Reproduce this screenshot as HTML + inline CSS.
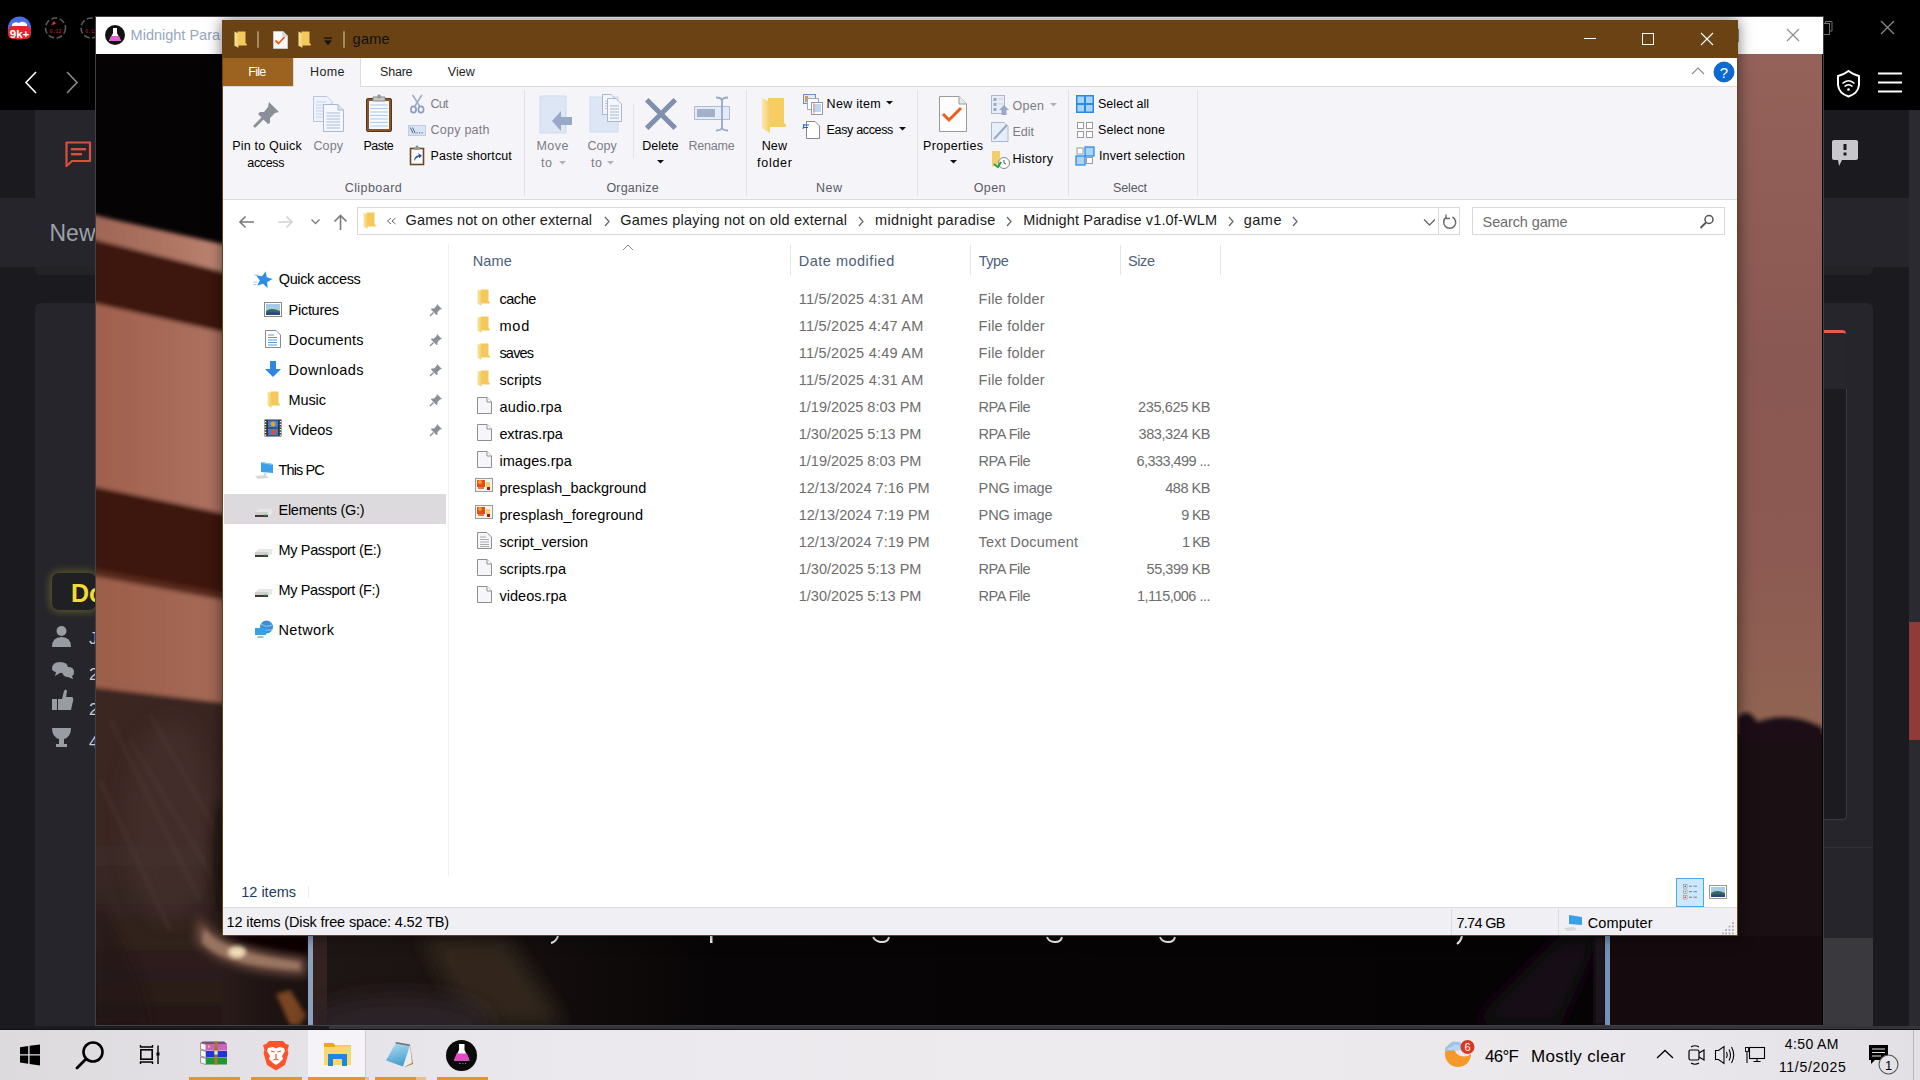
<!DOCTYPE html>
<html><head><meta charset="utf-8"><style>
html,body{margin:0;padding:0;width:1920px;height:1080px;overflow:hidden;background:#000;}
body{position:relative;font-family:"Liberation Sans",sans-serif;}
.t{position:absolute;white-space:nowrap;font-family:"Liberation Sans",sans-serif;}
svg{overflow:visible;}
</style></head><body>
<div style="position:absolute;left:0px;top:0px;width:1920px;height:1030px;background:#1b1b1f;"></div>
<div style="position:absolute;left:0px;top:0px;width:1920px;height:110px;background:#000;"></div>
<div style="position:absolute;left:35px;top:110px;width:61px;height:88px;background:#25252b;"></div>
<div style="position:absolute;left:0px;top:198px;width:96px;height:69px;background:#25252b;"></div>
<div style="position:absolute;left:35px;top:267px;width:61px;height:8px;background:#222227;border-radius:0 0 0 6px;"></div>
<div style="position:absolute;left:35px;top:303px;width:61px;height:727px;background:#25252b;border-radius:6px 0 0 0;"></div>
<svg style="position:absolute;left:0;top:0" width="96" height="110">
<path d="M8 30 A11.5 11.5 0 0 1 31 30 L31 30 Z" fill="#4a6ee0"/>
<circle cx="19.5" cy="28" r="11.5" fill="#4a6ee0"/>
<path d="M12 24 Q15 21 19 23 Q23 20 27 24 L27 27 L12 27Z" fill="#fff"/>
<rect x="8" y="26" width="23" height="13" rx="5" fill="#e8242a"/>
<text x="19.5" y="37.5" font-family="Liberation Sans" font-weight="bold" font-size="11.5" fill="#fff" text-anchor="middle">9k+</text>
<circle cx="55.5" cy="28" r="10" fill="none" stroke="#5a5a5a" stroke-width="1.6" stroke-dasharray="6 2.5"/>
<path d="M51 25 L54 21 L56 24 Z" fill="#e03030"/>
<text x="55.5" y="33" font-family="Liberation Mono" font-size="5" fill="#c02020" text-anchor="middle">0:12</text>
<circle cx="91" cy="28" r="10" fill="none" stroke="#5a5a5a" stroke-width="1.6" stroke-dasharray="6 2.5"/>
<text x="91" y="33" font-family="Liberation Mono" font-size="5" fill="#c02020" text-anchor="middle">0:12</text>
<path d="M36 72 L26 82.5 L36 93" fill="none" stroke="#fff" stroke-width="1.6"/>
<path d="M67 72 L77 82.5 L67 93" fill="none" stroke="#8a8a8a" stroke-width="1.6"/>
</svg>
<svg style="position:absolute;left:64;top:140px;left:64px" width="30" height="30">
<path d="M2.5 2.5 H26 V21 H8 L2.5 26 Z" fill="none" stroke="#d9503f" stroke-width="2.2" stroke-linejoin="round"/>
<rect x="7" y="8" width="15" height="2.4" fill="#d9503f"/><rect x="7" y="13" width="11" height="2.4" fill="#d9503f"/>
</svg>
<div class="t" style="left:49.50px;top:221.53px;font-size:23px;line-height:23px;color:#9ea0a8;">New</div>
<div style="position:absolute;left:52px;top:573px;width:44px;height:37px;background:#1f1f24;border-radius:7px;box-shadow:0 0 9px 2px rgba(200,190,40,0.35);"></div>
<div class="t" style="left:71.00px;top:580.84px;font-size:25px;line-height:25px;color:#f2dc32;font-weight:bold;">Do</div>
<svg style="position:absolute;left:50px;top:625px" width="46" height="125">
<circle cx="11.5" cy="6" r="5" fill="#9a9ca4"/><path d="M2 22 Q2 12 11.5 12 Q21 12 21 22 Z" fill="#9a9ca4"/>
<path d="M2 44 Q2 37 10 37 Q18 37 18 43 Q18 48 10 48 L5 51 L6 47 Q2 46 2 44Z" fill="#9a9ca4"/>
<path d="M12 47 Q13 43 18 42 Q24 42 24 47 Q24 50 22 51 L23 54 L18 52 Q13 52 12 47Z" fill="#9a9ca4"/>
<rect x="2" y="74" width="5" height="11" fill="#9a9ca4"/><path d="M8 74 L12 74 L14 66 Q16 63 17 66 L16 72 L22 72 Q24 73 23 76 L21 85 L8 85Z" fill="#9a9ca4"/>
<path d="M4 103 H21 Q21 112 14 114 V119 H17 V122 H6 V119 H9 V114 Q2 112 2 103Z" fill="#9a9ca4"/>
</svg>
<div class="t" style="left:89.00px;top:629.61px;font-size:17px;line-height:17px;color:#c8c8d0;">J</div>
<div class="t" style="left:89.00px;top:665.61px;font-size:17px;line-height:17px;color:#c8c8d0;">2</div>
<div class="t" style="left:89.00px;top:700.61px;font-size:17px;line-height:17px;color:#c8c8d0;">2</div>
<div class="t" style="left:89.00px;top:733.61px;font-size:17px;line-height:17px;color:#c8c8d0;">4</div>
<div style="position:absolute;left:1823px;top:198px;width:86px;height:69px;background:#25252b;"></div>
<div style="position:absolute;left:1823px;top:267px;width:50px;height:8px;background:#222227;border-radius:0 0 6px 0;"></div>
<div style="position:absolute;left:1823px;top:303px;width:50px;height:545px;background:#25252b;border-radius:0 6px 0 0;"></div>
<div style="position:absolute;left:1823px;top:330px;width:23px;height:59px;background:#26262c;border-top:3px solid #e85a4a;border-radius:0 4px 0 0;"></div>
<div style="position:absolute;left:1823px;top:389px;width:23px;height:430px;background:#1b1b20;border-right:1px solid #3a3a40;border-bottom:1px solid #3a3a40;border-radius:0 0 4px 0;"></div>
<div style="position:absolute;left:1823px;top:847px;width:50px;height:91px;background:#25252b;border-top:1px solid #303036;"></div>
<div style="position:absolute;left:1823px;top:938px;width:50px;height:92px;background:#3a393e;"></div>
<div style="position:absolute;left:1909px;top:110px;width:11px;height:920px;background:#2b2a30;"></div>
<div style="position:absolute;left:1909px;top:622px;width:11px;height:118px;background:#8e3b3a;"></div>
<svg style="position:absolute;left:1820px;top:15px" width="100" height="160">
<path d="M5.5 8.5 V6.5 H12 V16 H10" fill="none" stroke="#707070" stroke-width="1"/><rect x="2.5" y="8.5" width="7" height="11" fill="none" stroke="#707070" stroke-width="1"/>
<path d="M61 6 L74 19 M74 6 L61 19" stroke="#8a8a8a" stroke-width="1.3"/>
<path d="M18 61 Q24 59.5 28.5 56 Q33 59.5 39 61 L39 70 Q38 78.5 28.5 81.5 Q19 78.5 18 70Z" fill="none" stroke="#fff" stroke-width="2"/>
<path d="M22.5 68.5 Q28.5 63 34.5 68.5 M24.5 71.5 Q28.5 68 32.5 71.5" fill="none" stroke="#fff" stroke-width="1.6"/><circle cx="28.5" cy="74.5" r="1.3" fill="#fff"/>
<path d="M58 58.5 H82 M58 67.5 H82 M58 76.5 H82" stroke="#fff" stroke-width="2"/>
<path d="M14 125 H36 Q38 125 38 127 V143 Q38 145 36 145 H22 L19 151 L18 145 H14 Q12 145 12 143 V127 Q12 125 14 125Z" fill="#c8c8cc"/>
<rect x="23.5" y="129" width="3" height="6" fill="#1b1b1f"/><rect x="23.5" y="137.5" width="3" height="3" fill="#1b1b1f"/>
</svg>
<div style="position:absolute;left:95px;top:16px;width:1729px;height:1010px;background:#404046;"></div>
<div style="position:absolute;left:96px;top:17px;width:1727px;height:37px;background:#fff;"></div>
<svg style="position:absolute;left:96px;top:17px" width="1727" height="37">
<circle cx="19" cy="18" r="10" fill="#111"/>
<path d="M17 11 H21 V16 L25 24 H13 L17 16Z" fill="#fff"/><path d="M15 19 H23 L25 24 H13Z" fill="#e060d0"/>
<path d="M1691 12 L1703 24 M1703 12 L1691 24" stroke="#8a8a8a" stroke-width="1.1"/><rect x="1630.5" y="12.5" width="12" height="12" fill="none" stroke="#8a8a8a"/>

</svg>
<div class="t" style="left:130.60px;top:28.33px;font-size:14.5px;line-height:14.5px;color:#98a6bd;">Midnight Para</div>
<svg style="position:absolute;left:96px;top:54px;overflow:hidden" width="1727" height="971" viewBox="96 54 1727 971">
<defs>
<filter id="b2" x="-20%" y="-20%" width="140%" height="140%"><feGaussianBlur stdDeviation="2"/></filter>
<filter id="b5" x="-50%" y="-50%" width="200%" height="200%"><feGaussianBlur stdDeviation="5"/></filter>
<filter id="b10" x="-50%" y="-50%" width="200%" height="200%"><feGaussianBlur stdDeviation="10"/></filter>
<linearGradient id="beam" x1="0" y1="0" x2="1" y2="0"><stop offset="0" stop-color="#9c6252"/><stop offset="0.7" stop-color="#b47a68"/><stop offset="1" stop-color="#c89080"/></linearGradient>
<linearGradient id="wall1" x1="0" y1="0" x2="1" y2="0"><stop offset="0" stop-color="#9e5e4a"/><stop offset="1" stop-color="#b07464"/></linearGradient>
<linearGradient id="wall2" x1="0" y1="0" x2="1" y2="0"><stop offset="0" stop-color="#9a5c48"/><stop offset="1" stop-color="#a86c58"/></linearGradient>
<linearGradient id="dark" x1="0" y1="0" x2="0" y2="1"><stop offset="0" stop-color="#3a2622"/><stop offset="0.5" stop-color="#3a2925"/><stop offset="1" stop-color="#241614"/></linearGradient>
<linearGradient id="rwall" x1="0" y1="0" x2="0" y2="1"><stop offset="0" stop-color="#95625a"/><stop offset="0.45" stop-color="#8a5852"/><stop offset="0.75" stop-color="#8c5a52"/><stop offset="1" stop-color="#906452"/></linearGradient>
<linearGradient id="botg" x1="0" y1="0" x2="1" y2="0"><stop offset="0" stop-color="#1e1614"/><stop offset="0.1" stop-color="#1a1311"/><stop offset="0.3" stop-color="#080506"/><stop offset="1" stop-color="#060305"/></linearGradient>
<linearGradient id="stripg" x1="0" y1="0" x2="1" y2="0"><stop offset="0" stop-color="#291b1a"/><stop offset="0.5" stop-color="#1d1312"/><stop offset="1" stop-color="#1a1010"/></linearGradient>
</defs>
<rect x="96" y="54" width="1727" height="971" fill="#050304"/>
<g filter="url(#b2)">
<polygon points="80,210 240,256 240,340 80,300" fill="#3c140b"/>
<polygon points="80,212 240,248 240,276 80,236" fill="url(#beam)"/>
<polygon points="80,300 240,336 240,517 80,484" fill="url(#wall1)"/>
<polygon points="80,484 240,517 240,603 80,573" fill="#3e170e"/>
<polygon points="80,573 240,603 240,705 80,686" fill="url(#wall2)"/><polygon points="80,566 240,596 240,602 80,572" fill="#5a2a1a"/>
<polygon points="80,686 240,705 240,1040 80,1040" fill="url(#dark)"/>
</g>
<ellipse cx="170" cy="820" rx="45" ry="100" fill="#4a3430" opacity="0.5" filter="url(#b10)"/><g stroke="#5a4440" stroke-width="3" opacity="0.35" filter="url(#b2)"><path d="M110 720 L200 900"/><path d="M130 740 L215 880"/><path d="M150 715 L222 840"/><path d="M100 780 L170 930"/></g><path d="M96 900 Q140 960 150 1025 L96 1025Z" fill="#221614" opacity="0.6" filter="url(#b5)"/>
<ellipse cx="222" cy="860" rx="10" ry="60" fill="#1c1210" opacity="0.8" filter="url(#b5)"/>

<rect x="1737" y="54" width="86" height="680" fill="url(#rwall)"/>
<path d="M1737 718 Q1748 706 1757 722 Q1790 710 1823 728 L1823 1025 L1737 1025Z" fill="#1d1114" filter="url(#b2)"/>
<rect x="1737" y="740" width="86" height="285" fill="#1a0f12"/>
<rect x="222" y="936" width="105" height="89" fill="url(#stripg)"/>
<path d="M222 936 H308 V955 Q250 950 225 936Z" fill="#0c0505" filter="url(#b2)"/>
<path d="M198 915 Q215 948 306 958 L306 976 Q220 972 196 940Z" fill="#6e4e40" filter="url(#b5)"/><path d="M204 928 Q222 952 300 962 L300 970 Q222 966 202 942Z" fill="#9a7662" filter="url(#b2)"/>
<ellipse cx="237" cy="952" rx="9" ry="6" fill="#f0dcb8" filter="url(#b2)"/>
<path d="M276 994 L290 990 L306 1015 L300 1025 L290 1025Z" fill="#7a4420" filter="url(#b2)"/>
<rect x="313" y="936" width="14" height="89" fill="#33221f"/>
<rect x="327" y="936" width="1280" height="89" fill="url(#botg)"/><polygon points="420,936 505,936 565,1025 470,1025" fill="#30261a" filter="url(#b10)"/><ellipse cx="400" cy="1022" rx="90" ry="28" fill="#2c2028" filter="url(#b10)"/><polygon points="1600,936 1560,1025 1470,1025 1560,936" fill="#140d12" filter="url(#b10)"/>
<rect x="1594" y="936" width="12" height="89" fill="#1c171a" filter="url(#b2)"/>
<rect x="1608" y="936" width="215" height="89" fill="#150a0e"/>
<rect x="308" y="936" width="5" height="89" fill="#8aa2be"/>
<rect x="1605" y="936" width="5" height="89" fill="#7392b4"/>
<path d="M558 936 Q556 942 551 943" stroke="#fff" stroke-width="2" fill="none"/>
<rect x="710" y="936" width="2.5" height="7" fill="#fff"/>
<path d="M873 937 Q876 942 882 942 Q888 942 889 937" stroke="#fff" stroke-width="2" fill="none"/>
<path d="M1047 937 Q1049 942 1055 942 Q1061 942 1062 937" stroke="#fff" stroke-width="2" fill="none"/>
<path d="M1160 937 Q1162 942 1168 942 Q1174 942 1175 937" stroke="#fff" stroke-width="2" fill="none"/>
<path d="M1462 936 Q1461 941 1457 944" stroke="#fff" stroke-width="2" fill="none"/>
<rect x="1822" y="54" width="1" height="971" fill="#000"/>
</svg>
<div style="position:absolute;left:222px;top:20px;width:1516px;height:916px;background:#fff;box-shadow:0 0 14px rgba(0,0,0,0.55);"></div>
<div style="position:absolute;left:222px;top:20px;width:1516px;height:38px;background:#6a4213;"></div>
<div style="position:absolute;left:222px;top:20px;width:1px;height:916px;background:#6a4213;"></div>
<div style="position:absolute;left:1737px;top:20px;width:1px;height:916px;background:#6a4213;"></div>
<div style="position:absolute;left:222px;top:935px;width:1516px;height:1px;background:#6a4213;"></div>
<svg style="position:absolute;left:234px;top:31px" width="13" height="17" viewBox="0 0 13 17">
<defs><linearGradient id="fg1" x1="0" y1="0" x2="1" y2="0"><stop offset="0" stop-color="#fde6a0"/><stop offset="1" stop-color="#f3cc66"/></linearGradient></defs>
<path d="M3.5 0.5 H11.5 V12 L12.8 13 V14.5 H3.5Z" fill="#f4c85a"/>
<path d="M0.5 0.5 L4.5 2.5 V16.8 L0.5 14.8Z" fill="url(#fg1)"/>
</svg>
<div style="position:absolute;left:257px;top:31px;width:2px;height:17px;background:#a88a60;border-radius:1px;"></div>
<svg style="position:absolute;left:273px;top:31px" width="15" height="18"><path d="M0.5 0.5 H10 L14.5 5 V17.5 H0.5Z" fill="#fafafa" stroke="#c9c9c9"/><path d="M10 0.5 V5 H14.5" fill="#e0e0e0" stroke="#c9c9c9"/><path d="M2.5 9.5 L5.5 12.5 L11.5 6" fill="none" stroke="#f25a1a" stroke-width="1.8"/></svg>
<svg style="position:absolute;left:298px;top:31px" width="13" height="17" viewBox="0 0 13 17">
<defs><linearGradient id="fg2" x1="0" y1="0" x2="1" y2="0"><stop offset="0" stop-color="#fde6a0"/><stop offset="1" stop-color="#f3cc66"/></linearGradient></defs>
<path d="M3.5 0.5 H11.5 V12 L12.8 13 V14.5 H3.5Z" fill="#f4c85a"/>
<path d="M0.5 0.5 L4.5 2.5 V16.8 L0.5 14.8Z" fill="url(#fg2)"/>
</svg>
<svg style="position:absolute;left:323px;top:37px" width="10" height="9"><rect x="1" y="0.5" width="8" height="1.3" fill="#111"/><path d="M1 3.5 H9 L5 8Z" fill="#111"/></svg>
<div style="position:absolute;left:343px;top:31px;width:2px;height:17px;background:#a88a60;border-radius:1px;"></div>
<div class="t" style="left:352.60px;top:32.13px;font-size:14.5px;line-height:14.5px;color:#111;letter-spacing:0.233px;">game</div>
<div style="position:absolute;left:1584px;top:38px;width:12px;height:1px;background:#fff;"></div>
<div style="position:absolute;left:1642px;top:33px;width:12px;height:12px;background:transparent;border:1px solid #fff;box-sizing:border-box;"></div>
<svg style="position:absolute;left:1700px;top:32px" width="14" height="14"><path d="M1 1 L13 13 M13 1 L1 13" stroke="#fff" stroke-width="1.1"/></svg>
<div style="position:absolute;left:223px;top:58px;width:1514px;height:28px;background:#fff;"></div>
<div style="position:absolute;left:223px;top:86px;width:1514px;height:1px;background:#dadbdc;"></div>
<div style="position:absolute;left:223px;top:58px;width:71px;height:28px;background:#9c6220;"></div>
<div style="position:absolute;left:293px;top:58px;width:68px;height:29px;background:#f5f5f9;border-left:1px solid #dadbdc;border-right:1px solid #dadbdc;box-sizing:border-box;"></div>
<div class="t" style="left:248.25px;top:66.32px;font-size:12.5px;line-height:12.5px;color:#fff;letter-spacing:-0.700px;">File</div>
<div class="t" style="left:310.10px;top:66.32px;font-size:12.5px;line-height:12.5px;color:#1e1e1e;letter-spacing:0.367px;">Home</div>
<div class="t" style="left:380.00px;top:66.32px;font-size:12.5px;line-height:12.5px;color:#1e1e1e;letter-spacing:-0.200px;">Share</div>
<div class="t" style="left:447.80px;top:66.32px;font-size:12.5px;line-height:12.5px;color:#1e1e1e;letter-spacing:0.033px;">View</div>
<svg style="position:absolute;left:1690px;top:66px" width="16" height="12"><path d="M2 8 L8 2 L14 8" fill="none" stroke="#8a8a8a" stroke-width="1.1"/></svg>
<svg style="position:absolute;left:1713px;top:61px" width="22" height="22"><circle cx="11" cy="11" r="10" fill="#0a6ad6"/><circle cx="11" cy="11" r="10" fill="none" stroke="#0652a8" stroke-width="0.8"/><text x="11" y="17" font-family="Liberation Sans" font-size="15" fill="#fff" text-anchor="middle">?</text></svg>
<div style="position:absolute;left:223px;top:87px;width:1514px;height:112px;background:#f5f5f9;"></div>
<div style="position:absolute;left:223px;top:199px;width:1514px;height:1px;background:#dadbdc;"></div>
<div style="position:absolute;left:523.5px;top:90px;width:1px;height:106px;background:#e2e3e4;"></div>
<div style="position:absolute;left:745.5px;top:90px;width:1px;height:106px;background:#e2e3e4;"></div>
<div style="position:absolute;left:916.5px;top:90px;width:1px;height:106px;background:#e2e3e4;"></div>
<div style="position:absolute;left:1067.5px;top:90px;width:1px;height:106px;background:#e2e3e4;"></div>
<div style="position:absolute;left:1196.5px;top:90px;width:1px;height:106px;background:#e2e3e4;"></div>
<div style="position:absolute;left:632.5px;top:104px;width:1px;height:54px;background:#e2e3e4;"></div>
<div class="t" style="left:232.20px;top:139.92px;font-size:12.5px;line-height:12.5px;color:#000;letter-spacing:0.191px;">Pin to Quick</div>
<div class="t" style="left:247.30px;top:157.02px;font-size:12.5px;line-height:12.5px;color:#000;letter-spacing:-0.340px;">access</div>
<div class="t" style="left:313.40px;top:139.92px;font-size:12.5px;line-height:12.5px;color:#7c7c86;letter-spacing:0.133px;">Copy</div>
<div class="t" style="left:363.40px;top:139.92px;font-size:12.5px;line-height:12.5px;color:#000;letter-spacing:-0.425px;">Paste</div>
<div class="t" style="left:430.60px;top:98.42px;font-size:12.5px;line-height:12.5px;color:#7c7c86;letter-spacing:-0.750px;">Cut</div>
<div class="t" style="left:430.60px;top:124.42px;font-size:12.5px;line-height:12.5px;color:#7c7c86;letter-spacing:0.237px;">Copy path</div>
<div class="t" style="left:430.60px;top:150.12px;font-size:12.5px;line-height:12.5px;color:#000;letter-spacing:0.100px;">Paste shortcut</div>
<div class="t" style="left:344.70px;top:182.42px;font-size:12.5px;line-height:12.5px;color:#5a5a66;letter-spacing:0.438px;">Clipboard</div>
<div class="t" style="left:536.40px;top:139.92px;font-size:12.5px;line-height:12.5px;color:#7c7c86;letter-spacing:0.533px;">Move</div>
<div class="t" style="left:541.00px;top:157.02px;font-size:12.5px;line-height:12.5px;color:#7c7c86;letter-spacing:0.600px;">to</div>
<div class="t" style="left:587.60px;top:139.92px;font-size:12.5px;line-height:12.5px;color:#7c7c86;">Copy</div>
<div class="t" style="left:591.00px;top:157.02px;font-size:12.5px;line-height:12.5px;color:#7c7c86;letter-spacing:0.600px;">to</div>
<div class="t" style="left:642.30px;top:139.92px;font-size:12.5px;line-height:12.5px;color:#000;letter-spacing:-0.020px;">Delete</div>
<div class="t" style="left:688.40px;top:139.92px;font-size:12.5px;line-height:12.5px;color:#7c7c86;letter-spacing:-0.200px;">Rename</div>
<div class="t" style="left:606.40px;top:182.42px;font-size:12.5px;line-height:12.5px;color:#5a5a66;letter-spacing:0.214px;">Organize</div>
<div class="t" style="left:761.80px;top:139.92px;font-size:12.5px;line-height:12.5px;color:#000;letter-spacing:0.050px;">New</div>
<div class="t" style="left:757.00px;top:157.02px;font-size:12.5px;line-height:12.5px;color:#000;letter-spacing:0.740px;">folder</div>
<div class="t" style="left:826.60px;top:98.42px;font-size:12.5px;line-height:12.5px;color:#000;letter-spacing:0.300px;">New item</div>
<div class="t" style="left:826.60px;top:124.12px;font-size:12.5px;line-height:12.5px;color:#000;letter-spacing:-0.340px;">Easy access</div>
<div class="t" style="left:816.00px;top:182.42px;font-size:12.5px;line-height:12.5px;color:#5a5a66;letter-spacing:0.450px;">New</div>
<div class="t" style="left:923.00px;top:139.92px;font-size:12.5px;line-height:12.5px;color:#000;letter-spacing:0.333px;">Properties</div>
<div class="t" style="left:1012.50px;top:99.62px;font-size:12.5px;line-height:12.5px;color:#7c7c86;letter-spacing:0.300px;">Open</div>
<div class="t" style="left:1012.50px;top:125.92px;font-size:12.5px;line-height:12.5px;color:#7c7c86;">Edit</div>
<div class="t" style="left:1012.50px;top:152.82px;font-size:12.5px;line-height:12.5px;color:#000;letter-spacing:0.267px;">History</div>
<div class="t" style="left:973.75px;top:182.42px;font-size:12.5px;line-height:12.5px;color:#5a5a66;letter-spacing:0.367px;">Open</div>
<div class="t" style="left:1098.00px;top:97.92px;font-size:12.5px;line-height:12.5px;color:#000;letter-spacing:0.033px;">Select all</div>
<div class="t" style="left:1098.00px;top:124.12px;font-size:12.5px;line-height:12.5px;color:#000;letter-spacing:0.100px;">Select none</div>
<div class="t" style="left:1099.00px;top:150.12px;font-size:12.5px;line-height:12.5px;color:#000;letter-spacing:0.127px;">Invert selection</div>
<div class="t" style="left:1113.00px;top:182.42px;font-size:12.5px;line-height:12.5px;color:#5a5a66;letter-spacing:-0.140px;">Select</div>
<svg style="position:absolute;left:559px;top:161px" width="7" height="4"><path d="M0 0 H7 L3.5 3.5Z" fill="#b0b0b8"/></svg>
<svg style="position:absolute;left:607px;top:161px" width="7" height="4"><path d="M0 0 H7 L3.5 3.5Z" fill="#b0b0b8"/></svg>
<svg style="position:absolute;left:657px;top:160px" width="7" height="4"><path d="M0 0 H7 L3.5 3.5Z" fill="#111"/></svg>
<svg style="position:absolute;left:886px;top:101px" width="7" height="4"><path d="M0 0 H7 L3.5 3.5Z" fill="#111"/></svg>
<svg style="position:absolute;left:899px;top:127px" width="7" height="4"><path d="M0 0 H7 L3.5 3.5Z" fill="#111"/></svg>
<svg style="position:absolute;left:950px;top:160px" width="7" height="4"><path d="M0 0 H7 L3.5 3.5Z" fill="#111"/></svg>
<svg style="position:absolute;left:1050px;top:103px" width="7" height="4"><path d="M0 0 H7 L3.5 3.5Z" fill="#b0b0b8"/></svg>
<svg style="position:absolute;left:252px;top:99px" width="30" height="30"><path d="M17 3 L27 13 L23 14 L18 19 L18 24 L16 25 L6 15 L8 13 L12 13 L16 8 Z" fill="#8a8f99"/><path d="M11 19 L3 27" stroke="#8a8f99" stroke-width="3" stroke-linecap="round"/></svg>
<svg style="position:absolute;left:312px;top:95px" width="34" height="38"><path d="M1.5 1.5 H15 L20 6.5 V26.5 H1.5Z" fill="#eef2fa" stroke="#b9c6e0"/><path d="M4 7 H14 M4 10 H16 M4 13 H16 M4 16 H16 M4 19 H16 M4 22 H16" stroke="#c9d4ea"/><path d="M11.5 9.5 H26 L31.5 15 V36.5 H11.5Z" fill="#f4f7fd" stroke="#a8b8da"/><path d="M26 9.5 V15 H31.5" fill="#dde4f2" stroke="#a8b8da"/><path d="M14.5 18 H28 M14.5 21 H28 M14.5 24 H28 M14.5 27 H28 M14.5 30 H28 M14.5 33 H28" stroke="#a9bbdc"/></svg>
<svg style="position:absolute;left:365px;top:94px" width="28" height="39"><rect x="1.5" y="4.5" width="25" height="33" rx="1.5" fill="#8a5528" stroke="#5c3418"/><rect x="4" y="7" width="20" height="28" fill="#f5f8fd"/><path d="M5 11 H23 M5 14.5 H23 M5 18 H23 M5 21.5 H23 M5 25 H23 M5 28.5 H23 M5 32 H23" stroke="#a9cdea"/><path d="M8 3 H20 V7 H8Z" fill="#c8c8c8" stroke="#888"/><circle cx="14" cy="2.5" r="2" fill="#999"/></svg>
<svg style="position:absolute;left:408px;top:94px" width="18" height="20"><path d="M5 1.5 L11.5 12 M13.5 1.5 L7 12" stroke="#a4b2cc" stroke-width="1.8" stroke-linecap="round"/><ellipse cx="5.5" cy="15.5" rx="2.6" ry="3.2" fill="none" stroke="#8b9dc0" stroke-width="1.7"/><ellipse cx="13" cy="15.5" rx="2.6" ry="3.2" fill="none" stroke="#8b9dc0" stroke-width="1.7"/></svg>
<svg style="position:absolute;left:408px;top:125px" width="18" height="11"><rect x="0.5" y="0.5" width="17" height="10" fill="#d8e3f4" stroke="#bfcde6"/><path d="M2.3 2.5 L5 8.3 M4.6 2.5 L7.3 8.3" stroke="#4a6690" stroke-width="1"/><rect x="8.5" y="7.3" width="1.1" height="1.1" fill="#4a6690"/><rect x="11" y="7.3" width="1.1" height="1.1" fill="#4a6690"/><rect x="13.5" y="7.3" width="1.1" height="1.1" fill="#4a6690"/></svg>
<svg style="position:absolute;left:409px;top:145px" width="17" height="21"><rect x="1.5" y="3.5" width="13" height="16" fill="#fafafa" stroke="#6e4520" stroke-width="1.6"/><path d="M5 2 H11 V5 H5Z" fill="#9a9a9a"/><circle cx="8" cy="1.8" r="1.2" fill="#888"/><path d="M5 16 Q5 11 10 10 L9 8 L13 10.5 L10 13.5 L10 11.8 Q7 12.5 5 16Z" fill="#2a5ca8"/></svg>
<svg style="position:absolute;left:539px;top:95px" width="35" height="39"><rect x="1" y="1" width="26" height="37" fill="#dde6f4"/><rect x="1" y="1" width="26" height="37" fill="none" stroke="#d0dbee"/><path d="M33 22 V30 H22 V36 L13 26 L22 16 V22Z" fill="#98a8c6"/></svg>
<svg style="position:absolute;left:589px;top:93px" width="36" height="40"><rect x="1" y="4" width="28" height="35" fill="#dde6f4" stroke="#d0dbee"/><path d="M13.5 1.5 H22 L26.5 6 V21.5 H13.5Z" fill="#f3f6fb" stroke="#a8b6d4"/><path d="M16 8 H24 M16 10.5 H24 M16 13 H24 M16 15.5 H24" stroke="#b8c4dc"/><path d="M18.5 5.5 H27 L32.5 11 V28.5 H18.5Z" fill="#f3f6fb" stroke="#a8b6d4"/><path d="M21 13 H30 M21 16 H30 M21 19 H30 M21 22 H30 M21 25 H30" stroke="#a8b6d4"/></svg>
<svg style="position:absolute;left:644px;top:97px" width="34" height="34"><path d="M4.5 4.5 L29.5 29.5 M29.5 4.5 L4.5 29.5" stroke="#7f8fae" stroke-width="5" stroke-linecap="square"/></svg>
<svg style="position:absolute;left:693px;top:96px" width="38" height="36"><rect x="1.5" y="10.5" width="35" height="13" fill="#e4ebf8" stroke="#aebcd8"/><rect x="4" y="13" width="18" height="8" fill="#a2b0cc"/><path d="M23 1.5 Q29 1.5 29 5 Q29 1.5 35 1.5 M29 5 V31 M23 34.5 Q29 34.5 29 31 Q29 34.5 35 34.5" stroke="#98a8c6" stroke-width="1.8" fill="none"/></svg>
<svg style="position:absolute;left:761px;top:97px" width="26" height="37"><defs><linearGradient id="nff" x1="0" y1="0" x2="1" y2="0"><stop offset="0" stop-color="#fde8a8"/><stop offset="1" stop-color="#f4cc68"/></linearGradient></defs><path d="M7 1 H23 V26 L25 28 V30 H7Z" fill="#f6cd60"/><path d="M1 1 L9 5 V36 L1 31Z" fill="url(#nff)"/></svg>
<svg style="position:absolute;left:803px;top:94px" width="21" height="21"><rect x="0.5" y="0.5" width="12" height="9" fill="#dfeaf8" stroke="#6a8fc8"/><rect x="2" y="2" width="3" height="6" fill="#cc9966"/><rect x="4.5" y="4.5" width="11" height="11" fill="#fff" stroke="#aaa"/><rect x="8.5" y="8.5" width="11" height="12" fill="#fff" stroke="#999"/><path d="M10 11 H18 M10 13 H18 M10 15 H18 M10 17 H18" stroke="#5b9bd8" stroke-width="0.8"/><path d="M11 9 V20" stroke="#e08080" stroke-width="0.8"/></svg>
<svg style="position:absolute;left:802px;top:120px" width="19" height="20"><path d="M4.5 1.5 H13 L17.5 6 V18.5 H4.5Z" fill="#fff" stroke="#888"/><path d="M1 5 H7 M1 7.5 H6 M2 4 L1 9" stroke="#1e64c8" stroke-width="1"/></svg>
<svg style="position:absolute;left:938px;top:95px" width="30" height="38"><path d="M1.5 1.5 H21 L28.5 9 V36.5 H1.5Z" fill="#fdfdfd" stroke="#999"/><path d="M21 1.5 V9 H28.5" fill="#e8e8e8" stroke="#999"/><path d="M5 19 L11 25 L23 13" fill="none" stroke="#f25a1a" stroke-width="3"/></svg>
<svg style="position:absolute;left:991px;top:95px" width="19" height="21"><rect x="0.5" y="0.5" width="13" height="18" fill="#e8eef8" stroke="#aab8d8"/><rect x="2.5" y="3" width="3" height="3" fill="#98a8c6"/><rect x="2.5" y="8" width="3" height="3" fill="#98a8c6"/><rect x="2.5" y="13" width="3" height="3" fill="#98a8c6"/><path d="M7 4 H12 M7 9 H12" stroke="#c8d0e0"/><path d="M13 10 L18 15 H15.5 V20 H10.5 V15 H8Z" fill="#98a8c6"/></svg>
<svg style="position:absolute;left:991px;top:122px" width="20" height="20"><path d="M0.5 0.5 H13 L17 4.5 V19.5 H0.5Z" fill="#e8eef8" stroke="#aab8d8"/><path d="M3 17 L16 3" stroke="#98a8c6" stroke-width="2"/></svg>
<svg style="position:absolute;left:991px;top:150px" width="20" height="20"><path d="M1 1 H9 V12 L1 17Z" fill="#f4cf68"/><circle cx="13" cy="13" r="5.5" fill="#fff" stroke="#888"/><path d="M13 10 V13 L15 14" stroke="#555" fill="none"/><path d="M3 14 L7 17 L10 12" stroke="#2a9a3a" stroke-width="2" fill="none"/></svg>
<svg style="position:absolute;left:1075px;top:94px" width="20" height="20"><rect x="1" y="1" width="18" height="18" fill="#2a8ae8"/><rect x="2.5" y="2.5" width="6.5" height="6.5" fill="#a8d4f8"/><rect x="11" y="2.5" width="6.5" height="6.5" fill="#a8d4f8"/><rect x="2.5" y="11" width="6.5" height="6.5" fill="#a8d4f8"/><rect x="11" y="11" width="6.5" height="6.5" fill="#a8d4f8"/></svg>
<svg style="position:absolute;left:1076px;top:121px" width="18" height="18"><rect x="1.5" y="1.5" width="6" height="6" fill="#fff" stroke="#9a9a9a"/><rect x="10.5" y="1.5" width="6" height="6" fill="#fff" stroke="#9a9a9a"/><rect x="1.5" y="10.5" width="6" height="6" fill="#fff" stroke="#9a9a9a"/><rect x="10.5" y="10.5" width="6" height="6" fill="#fff" stroke="#9a9a9a"/></svg>
<svg style="position:absolute;left:1075px;top:146px" width="20" height="20"><rect x="2" y="2" width="6" height="6" fill="#fff" stroke="#9a9a9a"/><rect x="10" y="1" width="9" height="9" fill="#a8d4f8" stroke="#2a8ae8" stroke-width="1.3"/><rect x="1" y="10" width="9" height="9" fill="#a8d4f8" stroke="#2a8ae8" stroke-width="1.3"/><rect x="11.5" y="11.5" width="6" height="6" fill="#fff" stroke="#9a9a9a"/></svg>
<svg style="position:absolute;left:238px;top:215px" width="18" height="14"><path d="M16 7 H2 M7.5 1.5 L2 7 L7.5 12.5" fill="none" stroke="#7a7a7a" stroke-width="1.6"/></svg>
<svg style="position:absolute;left:277px;top:215px" width="18" height="14"><path d="M1 7 H15 M9.5 1.5 L15 7 L9.5 12.5" fill="none" stroke="#d2d2d2" stroke-width="1.6"/></svg>
<svg style="position:absolute;left:310px;top:218px" width="12" height="8"><path d="M1.5 1.5 L5.5 5.5 L9.5 1.5" fill="none" stroke="#7a7a7a" stroke-width="1.3"/></svg>
<svg style="position:absolute;left:333px;top:214px" width="15" height="17"><path d="M7.5 16 V2 M1.5 7.5 L7.5 1.5 L13.5 7.5" fill="none" stroke="#7a7a7a" stroke-width="1.6"/></svg>
<div style="position:absolute;left:357px;top:207px;width:1103px;height:28px;background:#fff;border:1px solid #d9d9d9;box-sizing:border-box;"></div>
<div style="position:absolute;left:1438px;top:207px;width:1px;height:28px;background:#d9d9d9;"></div>
<svg style="position:absolute;left:363px;top:212px" width="13" height="17" viewBox="0 0 13 17">
<defs><linearGradient id="fg3" x1="0" y1="0" x2="1" y2="0"><stop offset="0" stop-color="#fde6a0"/><stop offset="1" stop-color="#f3cc66"/></linearGradient></defs>
<path d="M3.5 0.5 H11.5 V12 L12.8 13 V14.5 H3.5Z" fill="#f4c85a"/>
<path d="M0.5 0.5 L4.5 2.5 V16.8 L0.5 14.8Z" fill="url(#fg3)"/>
</svg>
<svg style="position:absolute;left:386px;top:217px" width="11" height="8"><path d="M5 1 L1.5 4 L5 7 M9.5 1 L6 4 L9.5 7" fill="none" stroke="#666" stroke-width="1"/></svg>
<div class="t" style="left:405.60px;top:213.33px;font-size:14.5px;line-height:14.5px;color:#1a1a1a;letter-spacing:0.104px;">Games not on other external</div>
<div class="t" style="left:620.30px;top:213.33px;font-size:14.5px;line-height:14.5px;color:#1a1a1a;letter-spacing:0.209px;">Games playing not on old external</div>
<div class="t" style="left:875.00px;top:213.33px;font-size:14.5px;line-height:14.5px;color:#1a1a1a;letter-spacing:0.369px;">midnight paradise</div>
<div class="t" style="left:1023.30px;top:213.33px;font-size:14.5px;line-height:14.5px;color:#1a1a1a;letter-spacing:0.135px;">Midnight Paradise v1.0f-WLM</div>
<div class="t" style="left:1243.80px;top:213.33px;font-size:14.5px;line-height:14.5px;color:#1a1a1a;letter-spacing:0.467px;">game</div>
<svg style="position:absolute;left:604px;top:216px" width="7" height="11"><path d="M1 1 L5 5.5 L1 10" fill="none" stroke="#6a6a6a" stroke-width="1.3"/></svg>
<svg style="position:absolute;left:858px;top:216px" width="7" height="11"><path d="M1 1 L5 5.5 L1 10" fill="none" stroke="#6a6a6a" stroke-width="1.3"/></svg>
<svg style="position:absolute;left:1006px;top:216px" width="7" height="11"><path d="M1 1 L5 5.5 L1 10" fill="none" stroke="#6a6a6a" stroke-width="1.3"/></svg>
<svg style="position:absolute;left:1228px;top:216px" width="7" height="11"><path d="M1 1 L5 5.5 L1 10" fill="none" stroke="#6a6a6a" stroke-width="1.3"/></svg>
<svg style="position:absolute;left:1292px;top:216px" width="7" height="11"><path d="M1 1 L5 5.5 L1 10" fill="none" stroke="#6a6a6a" stroke-width="1.3"/></svg>
<svg style="position:absolute;left:1423px;top:218px" width="13" height="9"><path d="M1 1.5 L6.5 7 L12 1.5" fill="none" stroke="#6a6a6a" stroke-width="1.3"/></svg>
<svg style="position:absolute;left:1442px;top:214px" width="16" height="16"><path d="M10.5 3 A6 6 0 1 1 4.5 3.2" fill="none" stroke="#6a6a6a" stroke-width="1.5"/><path d="M4 0.5 V4.5 H8" fill="none" stroke="#6a6a6a" stroke-width="1.3"/></svg>
<div style="position:absolute;left:1472px;top:207px;width:253px;height:28px;background:#fff;border:1px solid #d9d9d9;box-sizing:border-box;"></div>
<div class="t" style="left:1482.60px;top:214.93px;font-size:14.5px;line-height:14.5px;color:#6d6d6d;letter-spacing:-0.120px;">Search game</div>
<svg style="position:absolute;left:1699px;top:214px" width="16" height="16"><circle cx="10" cy="5.5" r="4" fill="none" stroke="#555" stroke-width="1.5"/><path d="M7 8.5 L1.5 14" stroke="#555" stroke-width="1.8"/></svg>
<div style="position:absolute;left:448px;top:244px;width:1px;height:632px;background:#f0f0f0;"></div>
<svg style="position:absolute;left:253px;top:270px" width="21" height="18"><g transform="rotate(12 11 9)"><path d="M11 1 L13.4 6.8 L19.5 7.3 L14.8 11.2 L16.3 17 L11 13.8 L5.8 17 L7.2 11.2 L2.5 7.3 L8.6 6.8Z" fill="#2e8de6"/></g><path d="M1 5 H6 M0.5 12 H4 M0.5 14.5 H3.5" stroke="#8cc4f4" stroke-width="0.9"/></svg>
<div class="t" style="left:278.75px;top:272.43px;font-size:14.5px;line-height:14.5px;color:#000;letter-spacing:-0.382px;">Quick access</div>
<div class="t" style="left:288.60px;top:302.63px;font-size:14.5px;line-height:14.5px;color:#000;letter-spacing:-0.286px;">Pictures</div>
<svg style="position:absolute;left:429px;top:302.9px" width="14" height="14"><path d="M8 1 L13 6 L11 6.5 L8.5 9 L8.5 11.5 L7.5 12 L2 6.5 L2.5 5.5 L5 5.5 L7.5 3Z" fill="#8a8f99"/><path d="M4.5 9.5 L1 13" stroke="#8a8f99" stroke-width="1.5"/></svg>
<div class="t" style="left:288.60px;top:332.63px;font-size:14.5px;line-height:14.5px;color:#000;letter-spacing:0.188px;">Documents</div>
<svg style="position:absolute;left:429px;top:332.9px" width="14" height="14"><path d="M8 1 L13 6 L11 6.5 L8.5 9 L8.5 11.5 L7.5 12 L2 6.5 L2.5 5.5 L5 5.5 L7.5 3Z" fill="#8a8f99"/><path d="M4.5 9.5 L1 13" stroke="#8a8f99" stroke-width="1.5"/></svg>
<div class="t" style="left:288.60px;top:362.63px;font-size:14.5px;line-height:14.5px;color:#000;letter-spacing:0.387px;">Downloads</div>
<svg style="position:absolute;left:429px;top:362.9px" width="14" height="14"><path d="M8 1 L13 6 L11 6.5 L8.5 9 L8.5 11.5 L7.5 12 L2 6.5 L2.5 5.5 L5 5.5 L7.5 3Z" fill="#8a8f99"/><path d="M4.5 9.5 L1 13" stroke="#8a8f99" stroke-width="1.5"/></svg>
<div class="t" style="left:288.60px;top:392.63px;font-size:14.5px;line-height:14.5px;color:#000;letter-spacing:-0.125px;">Music</div>
<svg style="position:absolute;left:429px;top:392.9px" width="14" height="14"><path d="M8 1 L13 6 L11 6.5 L8.5 9 L8.5 11.5 L7.5 12 L2 6.5 L2.5 5.5 L5 5.5 L7.5 3Z" fill="#8a8f99"/><path d="M4.5 9.5 L1 13" stroke="#8a8f99" stroke-width="1.5"/></svg>
<div class="t" style="left:288.60px;top:422.63px;font-size:14.5px;line-height:14.5px;color:#000;letter-spacing:-0.020px;">Videos</div>
<svg style="position:absolute;left:429px;top:422.9px" width="14" height="14"><path d="M8 1 L13 6 L11 6.5 L8.5 9 L8.5 11.5 L7.5 12 L2 6.5 L2.5 5.5 L5 5.5 L7.5 3Z" fill="#8a8f99"/><path d="M4.5 9.5 L1 13" stroke="#8a8f99" stroke-width="1.5"/></svg>
<svg style="position:absolute;left:264px;top:302px" width="18" height="15"><rect x="0.5" y="0.5" width="17" height="14" fill="#fff" stroke="#8a8a8a"/><rect x="2" y="2" width="14" height="11" fill="#a8cce8"/><path d="M2 9 Q7 5 16 9 V13 H2Z" fill="#3a6a5a"/><path d="M2 11 Q9 9 16 11 V13 H2Z" fill="#2a4a88"/></svg>
<svg style="position:absolute;left:265px;top:330px" width="16" height="18"><path d="M0.5 0.5 H11 L15.5 5 V17.5 H0.5Z" fill="#fff" stroke="#8a8a8a"/><path d="M3 5 H9 M3 7.5 H12 M3 10 H12 M3 12.5 H12 M3 15 H12" stroke="#5a9ad8" stroke-width="1"/></svg>
<svg style="position:absolute;left:264px;top:360px" width="18" height="18"><path d="M6 1 H12 V9 H17 L9 17 L1 9 H6Z" fill="#2e86e0"/></svg>
<svg style="position:absolute;left:267px;top:391px" width="13" height="17" viewBox="0 0 13 17">
<defs><linearGradient id="fg4" x1="0" y1="0" x2="1" y2="0"><stop offset="0" stop-color="#fde6a0"/><stop offset="1" stop-color="#f3cc66"/></linearGradient></defs>
<path d="M3.5 0.5 H11.5 V12 L12.8 13 V14.5 H3.5Z" fill="#f4c85a"/>
<path d="M0.5 0.5 L4.5 2.5 V16.8 L0.5 14.8Z" fill="url(#fg4)"/>
</svg>
<svg style="position:absolute;left:264px;top:419px" width="18" height="18"><rect x="0.5" y="0.5" width="17" height="17" fill="#333"/><rect x="4" y="1.5" width="10" height="7" fill="#3b7ed8"/><rect x="4" y="9.5" width="10" height="7" fill="#3b7ed8"/><circle cx="9" cy="5" r="2.5" fill="#e8a020"/><circle cx="9" cy="13" r="2.5" fill="#e05030"/><path d="M1.5 2 V17 M16.5 2 V17" stroke="#fff" stroke-dasharray="1.2 1.5" stroke-width="1.5"/></svg>
<svg style="position:absolute;left:254px;top:461px" width="20" height="19"><path d="M7 1 L19 3 V12 L7 11Z" fill="#3aa0e8"/><path d="M7 1 L19 3 V4 L7 2Z" fill="#9ad0f8"/><path d="M1 15 L12 14 L15 17 L4 18Z" fill="#d8d8d8"/><path d="M11 12 V14" stroke="#aaa"/></svg>
<div class="t" style="left:278.50px;top:462.73px;font-size:14.5px;line-height:14.5px;color:#000;letter-spacing:-0.883px;">This PC</div>
<div style="position:absolute;left:223.5px;top:494px;width:222px;height:30px;background:#dcdadc;"></div>
<svg style="position:absolute;left:254px;top:508px" width="19" height="10"><path d="M1 4 L5 1 H18 V6 L14 9 H1Z" fill="#e6e6e6"/><path d="M1 4 H14 V9 H1Z" fill="#cfcfcf"/><path d="M1 4 L1 9 H14 V7 H1" fill="#3a3a3a"/><rect x="10" y="6.5" width="3" height="1" fill="#3c3"/></svg>
<div class="t" style="left:278.50px;top:502.73px;font-size:14.5px;line-height:14.5px;color:#000;letter-spacing:-0.275px;">Elements (G:)</div>
<svg style="position:absolute;left:254px;top:548px" width="19" height="10"><path d="M1 4 L5 1 H18 V6 L14 9 H1Z" fill="#e6e6e6"/><path d="M1 4 H14 V9 H1Z" fill="#cfcfcf"/><path d="M1 4 L1 9 H14 V7 H1" fill="#3a3a3a"/><rect x="10" y="6.5" width="3" height="1" fill="#3c3"/></svg>
<div class="t" style="left:278.50px;top:542.73px;font-size:14.5px;line-height:14.5px;color:#000;letter-spacing:-0.347px;">My Passport (E:)</div>
<svg style="position:absolute;left:254px;top:588px" width="19" height="10"><path d="M1 4 L5 1 H18 V6 L14 9 H1Z" fill="#e6e6e6"/><path d="M1 4 H14 V9 H1Z" fill="#cfcfcf"/><path d="M1 4 L1 9 H14 V7 H1" fill="#3a3a3a"/><rect x="10" y="6.5" width="3" height="1" fill="#3c3"/></svg>
<div class="t" style="left:278.50px;top:582.73px;font-size:14.5px;line-height:14.5px;color:#000;letter-spacing:-0.373px;">My Passport (F:)</div>
<svg style="position:absolute;left:254px;top:620px" width="19" height="19"><circle cx="12.5" cy="7" r="6.5" fill="#3a90d8"/><path d="M7 4 Q12 8 18 5 M9 12 Q13 9 18 10" stroke="#9ad0f0" fill="none"/><path d="M1 8 H12 V15 H1Z" fill="#36a0e8"/><path d="M4 16 H9 L10 18 H3Z" fill="#bbb"/></svg>
<div class="t" style="left:278.50px;top:622.73px;font-size:14.5px;line-height:14.5px;color:#000;letter-spacing:0.383px;">Network</div>
<div class="t" style="left:472.80px;top:253.63px;font-size:14.5px;line-height:14.5px;color:#4c607a;letter-spacing:0.100px;">Name</div>
<div class="t" style="left:798.70px;top:253.63px;font-size:14.5px;line-height:14.5px;color:#4c607a;letter-spacing:0.508px;">Date modified</div>
<div class="t" style="left:978.70px;top:253.63px;font-size:14.5px;line-height:14.5px;color:#4c607a;letter-spacing:-0.467px;">Type</div>
<div class="t" style="left:1128.00px;top:253.63px;font-size:14.5px;line-height:14.5px;color:#4c607a;letter-spacing:-0.400px;">Size</div>
<div style="position:absolute;left:790px;top:245px;width:1px;height:30px;background:#e5e5e5;"></div>
<div style="position:absolute;left:970px;top:245px;width:1px;height:30px;background:#e5e5e5;"></div>
<div style="position:absolute;left:1120px;top:245px;width:1px;height:30px;background:#e5e5e5;"></div>
<div style="position:absolute;left:1220px;top:245px;width:1px;height:30px;background:#e5e5e5;"></div>
<svg style="position:absolute;left:622px;top:244px" width="12" height="7"><path d="M1 6 L6 1 L11 6" fill="none" stroke="#8a8a8a" stroke-width="1"/></svg>
<div class="t" style="left:499.40px;top:291.73px;font-size:14.5px;line-height:14.5px;color:#000;letter-spacing:-0.425px;">cache</div>
<div class="t" style="left:798.70px;top:291.73px;font-size:14.5px;line-height:14.5px;color:#6d6d6d;letter-spacing:0.250px;">11/5/2025 4:31 AM</div>
<div class="t" style="left:978.60px;top:291.73px;font-size:14.5px;line-height:14.5px;color:#6d6d6d;letter-spacing:0.230px;">File folder</div>
<svg style="position:absolute;left:477px;top:289px" width="13" height="17" viewBox="0 0 13 17">
<defs><linearGradient id="fg5" x1="0" y1="0" x2="1" y2="0"><stop offset="0" stop-color="#fde6a0"/><stop offset="1" stop-color="#f3cc66"/></linearGradient></defs>
<path d="M3.5 0.5 H11.5 V12 L12.8 13 V14.5 H3.5Z" fill="#f4c85a"/>
<path d="M0.5 0.5 L4.5 2.5 V16.8 L0.5 14.8Z" fill="url(#fg5)"/>
</svg>
<div class="t" style="left:499.40px;top:318.73px;font-size:14.5px;line-height:14.5px;color:#000;letter-spacing:0.900px;">mod</div>
<div class="t" style="left:798.70px;top:318.73px;font-size:14.5px;line-height:14.5px;color:#6d6d6d;letter-spacing:0.250px;">11/5/2025 4:47 AM</div>
<div class="t" style="left:978.60px;top:318.73px;font-size:14.5px;line-height:14.5px;color:#6d6d6d;letter-spacing:0.230px;">File folder</div>
<svg style="position:absolute;left:477px;top:316px" width="13" height="17" viewBox="0 0 13 17">
<defs><linearGradient id="fg6" x1="0" y1="0" x2="1" y2="0"><stop offset="0" stop-color="#fde6a0"/><stop offset="1" stop-color="#f3cc66"/></linearGradient></defs>
<path d="M3.5 0.5 H11.5 V12 L12.8 13 V14.5 H3.5Z" fill="#f4c85a"/>
<path d="M0.5 0.5 L4.5 2.5 V16.8 L0.5 14.8Z" fill="url(#fg6)"/>
</svg>
<div class="t" style="left:499.40px;top:345.73px;font-size:14.5px;line-height:14.5px;color:#000;letter-spacing:-0.787px;">saves</div>
<div class="t" style="left:798.70px;top:345.73px;font-size:14.5px;line-height:14.5px;color:#6d6d6d;letter-spacing:0.250px;">11/5/2025 4:49 AM</div>
<div class="t" style="left:978.60px;top:345.73px;font-size:14.5px;line-height:14.5px;color:#6d6d6d;letter-spacing:0.230px;">File folder</div>
<svg style="position:absolute;left:477px;top:343px" width="13" height="17" viewBox="0 0 13 17">
<defs><linearGradient id="fg7" x1="0" y1="0" x2="1" y2="0"><stop offset="0" stop-color="#fde6a0"/><stop offset="1" stop-color="#f3cc66"/></linearGradient></defs>
<path d="M3.5 0.5 H11.5 V12 L12.8 13 V14.5 H3.5Z" fill="#f4c85a"/>
<path d="M0.5 0.5 L4.5 2.5 V16.8 L0.5 14.8Z" fill="url(#fg7)"/>
</svg>
<div class="t" style="left:499.40px;top:372.73px;font-size:14.5px;line-height:14.5px;color:#000;letter-spacing:0.017px;">scripts</div>
<div class="t" style="left:798.70px;top:372.73px;font-size:14.5px;line-height:14.5px;color:#6d6d6d;letter-spacing:0.250px;">11/5/2025 4:31 AM</div>
<div class="t" style="left:978.60px;top:372.73px;font-size:14.5px;line-height:14.5px;color:#6d6d6d;letter-spacing:0.230px;">File folder</div>
<svg style="position:absolute;left:477px;top:370px" width="13" height="17" viewBox="0 0 13 17">
<defs><linearGradient id="fg8" x1="0" y1="0" x2="1" y2="0"><stop offset="0" stop-color="#fde6a0"/><stop offset="1" stop-color="#f3cc66"/></linearGradient></defs>
<path d="M3.5 0.5 H11.5 V12 L12.8 13 V14.5 H3.5Z" fill="#f4c85a"/>
<path d="M0.5 0.5 L4.5 2.5 V16.8 L0.5 14.8Z" fill="url(#fg8)"/>
</svg>
<div class="t" style="left:499.40px;top:399.73px;font-size:14.5px;line-height:14.5px;color:#000;letter-spacing:0.250px;">audio.rpa</div>
<div class="t" style="left:798.70px;top:399.73px;font-size:14.5px;line-height:14.5px;color:#6d6d6d;letter-spacing:0.013px;">1/19/2025 8:03 PM</div>
<div class="t" style="left:978.60px;top:399.73px;font-size:14.5px;line-height:14.5px;color:#6d6d6d;letter-spacing:-0.471px;">RPA File</div>
<div class="t" style="left:1138.00px;top:399.73px;font-size:14.5px;line-height:14.5px;color:#6d6d6d;letter-spacing:-0.367px;">235,625 KB</div>
<svg style="position:absolute;left:477px;top:396.5px" width="15" height="17"><path d="M0.5 0.5 H10 L14.5 5 V16.5 H0.5Z" fill="#f6f6fa" stroke="#8e8e8e"/><path d="M10 0.5 V5 H14.5" fill="#fff" stroke="#8e8e8e"/></svg>
<div class="t" style="left:499.40px;top:426.73px;font-size:14.5px;line-height:14.5px;color:#000;letter-spacing:-0.111px;">extras.rpa</div>
<div class="t" style="left:798.70px;top:426.73px;font-size:14.5px;line-height:14.5px;color:#6d6d6d;letter-spacing:0.013px;">1/30/2025 5:13 PM</div>
<div class="t" style="left:978.60px;top:426.73px;font-size:14.5px;line-height:14.5px;color:#6d6d6d;letter-spacing:-0.471px;">RPA File</div>
<div class="t" style="left:1138.50px;top:426.73px;font-size:14.5px;line-height:14.5px;color:#6d6d6d;letter-spacing:-0.422px;">383,324 KB</div>
<svg style="position:absolute;left:477px;top:423.5px" width="15" height="17"><path d="M0.5 0.5 H10 L14.5 5 V16.5 H0.5Z" fill="#f6f6fa" stroke="#8e8e8e"/><path d="M10 0.5 V5 H14.5" fill="#fff" stroke="#8e8e8e"/></svg>
<div class="t" style="left:499.40px;top:453.73px;font-size:14.5px;line-height:14.5px;color:#000;letter-spacing:0.078px;">images.rpa</div>
<div class="t" style="left:798.70px;top:453.73px;font-size:14.5px;line-height:14.5px;color:#6d6d6d;letter-spacing:0.013px;">1/19/2025 8:03 PM</div>
<div class="t" style="left:978.60px;top:453.73px;font-size:14.5px;line-height:14.5px;color:#6d6d6d;letter-spacing:-0.471px;">RPA File</div>
<div class="t" style="left:1136.50px;top:453.73px;font-size:14.5px;line-height:14.5px;color:#6d6d6d;letter-spacing:-0.550px;">6,333,499 ...</div>
<svg style="position:absolute;left:477px;top:450.5px" width="15" height="17"><path d="M0.5 0.5 H10 L14.5 5 V16.5 H0.5Z" fill="#f6f6fa" stroke="#8e8e8e"/><path d="M10 0.5 V5 H14.5" fill="#fff" stroke="#8e8e8e"/></svg>
<div class="t" style="left:499.40px;top:480.73px;font-size:14.5px;line-height:14.5px;color:#000;letter-spacing:0.005px;">presplash_background</div>
<div class="t" style="left:798.70px;top:480.73px;font-size:14.5px;line-height:14.5px;color:#6d6d6d;letter-spacing:0.024px;">12/13/2024 7:16 PM</div>
<div class="t" style="left:978.60px;top:480.73px;font-size:14.5px;line-height:14.5px;color:#6d6d6d;letter-spacing:-0.113px;">PNG image</div>
<div class="t" style="left:1165.20px;top:480.73px;font-size:14.5px;line-height:14.5px;color:#6d6d6d;letter-spacing:-0.460px;">488 KB</div>
<svg style="position:absolute;left:475px;top:478px" width="18" height="14"><rect x="0.5" y="0.5" width="17" height="13" fill="#f4f4f4" stroke="#9a9a9a"/><rect x="2" y="2" width="8" height="7" fill="#e84a20"/><circle cx="5" cy="4" r="2" fill="#f0a020"/><rect x="11" y="4" width="4" height="5" fill="#f0d060"/><rect x="12" y="9" width="3" height="3" fill="#a01818"/><rect x="3" y="9" width="6" height="2" fill="#f07a30"/></svg>
<div class="t" style="left:499.40px;top:507.73px;font-size:14.5px;line-height:14.5px;color:#000;letter-spacing:0.137px;">presplash_foreground</div>
<div class="t" style="left:798.70px;top:507.73px;font-size:14.5px;line-height:14.5px;color:#6d6d6d;letter-spacing:0.024px;">12/13/2024 7:19 PM</div>
<div class="t" style="left:978.60px;top:507.73px;font-size:14.5px;line-height:14.5px;color:#6d6d6d;letter-spacing:-0.113px;">PNG image</div>
<div class="t" style="left:1181.30px;top:507.73px;font-size:14.5px;line-height:14.5px;color:#6d6d6d;letter-spacing:-0.733px;">9 KB</div>
<svg style="position:absolute;left:475px;top:505px" width="18" height="14"><rect x="0.5" y="0.5" width="17" height="13" fill="#f4f4f4" stroke="#9a9a9a"/><rect x="2" y="2" width="8" height="7" fill="#e84a20"/><circle cx="5" cy="4" r="2" fill="#f0a020"/><rect x="11" y="4" width="4" height="5" fill="#f0d060"/><rect x="12" y="9" width="3" height="3" fill="#a01818"/><rect x="3" y="9" width="6" height="2" fill="#f07a30"/></svg>
<div class="t" style="left:499.40px;top:534.73px;font-size:14.5px;line-height:14.5px;color:#000;letter-spacing:-0.069px;">script_version</div>
<div class="t" style="left:798.70px;top:534.73px;font-size:14.5px;line-height:14.5px;color:#6d6d6d;letter-spacing:0.024px;">12/13/2024 7:19 PM</div>
<div class="t" style="left:978.60px;top:534.73px;font-size:14.5px;line-height:14.5px;color:#6d6d6d;letter-spacing:0.225px;">Text Document</div>
<div class="t" style="left:1182.00px;top:534.73px;font-size:14.5px;line-height:14.5px;color:#6d6d6d;letter-spacing:-0.967px;">1 KB</div>
<svg style="position:absolute;left:477px;top:531.5px" width="15" height="17"><path d="M0.5 0.5 H10 L14.5 5 V16.5 H0.5Z" fill="#f6f6fa" stroke="#8e8e8e"/><path d="M3 5 H9 M3 7.5 H12 M3 10 H12 M3 12.5 H12 M3 14.5 H12" stroke="#9a9a9a" stroke-width="0.8"/></svg>
<div class="t" style="left:499.40px;top:561.73px;font-size:14.5px;line-height:14.5px;color:#000;letter-spacing:-0.030px;">scripts.rpa</div>
<div class="t" style="left:798.70px;top:561.73px;font-size:14.5px;line-height:14.5px;color:#6d6d6d;letter-spacing:0.013px;">1/30/2025 5:13 PM</div>
<div class="t" style="left:978.60px;top:561.73px;font-size:14.5px;line-height:14.5px;color:#6d6d6d;letter-spacing:-0.471px;">RPA File</div>
<div class="t" style="left:1146.60px;top:561.73px;font-size:14.5px;line-height:14.5px;color:#6d6d6d;letter-spacing:-0.475px;">55,399 KB</div>
<svg style="position:absolute;left:477px;top:558.5px" width="15" height="17"><path d="M0.5 0.5 H10 L14.5 5 V16.5 H0.5Z" fill="#f6f6fa" stroke="#8e8e8e"/><path d="M10 0.5 V5 H14.5" fill="#fff" stroke="#8e8e8e"/></svg>
<div class="t" style="left:499.40px;top:588.73px;font-size:14.5px;line-height:14.5px;color:#000;letter-spacing:0.039px;">videos.rpa</div>
<div class="t" style="left:798.70px;top:588.73px;font-size:14.5px;line-height:14.5px;color:#6d6d6d;letter-spacing:0.013px;">1/30/2025 5:13 PM</div>
<div class="t" style="left:978.60px;top:588.73px;font-size:14.5px;line-height:14.5px;color:#6d6d6d;letter-spacing:-0.471px;">RPA File</div>
<div class="t" style="left:1137.00px;top:588.73px;font-size:14.5px;line-height:14.5px;color:#6d6d6d;letter-spacing:-0.500px;">1,115,006 ...</div>
<svg style="position:absolute;left:477px;top:585.5px" width="15" height="17"><path d="M0.5 0.5 H10 L14.5 5 V16.5 H0.5Z" fill="#f6f6fa" stroke="#8e8e8e"/><path d="M10 0.5 V5 H14.5" fill="#fff" stroke="#8e8e8e"/></svg>
<div class="t" style="left:241.30px;top:885.33px;font-size:14.5px;line-height:14.5px;color:#1e3a60;letter-spacing:-0.014px;">12 items</div>
<div style="position:absolute;left:308px;top:886px;width:1px;height:12px;background:#ececec;"></div>
<div style="position:absolute;left:1676px;top:878px;width:28px;height:29px;background:#cce8ff;border:1px solid #4aa8f0;box-sizing:border-box;"></div>
<svg style="position:absolute;left:1683px;top:884px" width="15" height="16"><rect x="0.5" y="0.5" width="3.5" height="3.5" fill="#fff" stroke="#888" stroke-width="0.6"/><rect x="1.5" y="1.5" width="1.5" height="1.5" fill="#2a6ab0"/><rect x="0.5" y="6" width="3.5" height="3.5" fill="#fff" stroke="#888" stroke-width="0.6"/><rect x="1.5" y="7" width="1.5" height="1.5" fill="#b0a020"/><rect x="0.5" y="11.5" width="3.5" height="3.5" fill="#fff" stroke="#888" stroke-width="0.6"/><rect x="1.5" y="12.5" width="1.5" height="1.5" fill="#d03020"/><path d="M6 2.2 H9 M10.5 2.2 H14 M6 7.7 H9 M10.5 7.7 H14 M6 13.2 H9 M10.5 13.2 H14" stroke="#666" stroke-width="0.8"/></svg>
<svg style="position:absolute;left:1709px;top:885px" width="18" height="14"><rect x="0.5" y="0.5" width="17" height="13" fill="#fff" stroke="#999"/><rect x="2" y="2" width="14" height="10" fill="#a8d0ec"/><path d="M2 8 Q8 4 16 8 V12 H2Z" fill="#3a6a5a"/><path d="M2 10 Q9 8.5 16 10 V12 H2Z" fill="#244a86"/></svg>
<div style="position:absolute;left:223px;top:907px;width:1514px;height:28px;background:#f0eff3;"></div>
<div style="position:absolute;left:223px;top:907px;width:1514px;height:1px;background:#dadbdc;"></div>
<div style="position:absolute;left:1451px;top:909px;width:1px;height:26px;background:#dcdcdc;"></div>
<div style="position:absolute;left:1558px;top:909px;width:1px;height:26px;background:#dcdcdc;"></div>
<div class="t" style="left:226.60px;top:915.03px;font-size:14.5px;line-height:14.5px;color:#000;letter-spacing:-0.129px;">12 items (Disk free space: 4.52 TB)</div>
<div class="t" style="left:1456.40px;top:915.53px;font-size:14.5px;line-height:14.5px;color:#000;letter-spacing:-0.700px;">7.74 GB</div>
<svg style="position:absolute;left:1563px;top:914px" width="21" height="18"><path d="M6 1 L19 3 V11 L6 10Z" fill="#3aa0e8"/><path d="M1 14 L11 13 L14 16 L4 17Z" fill="#d8d8d8"/></svg>
<div class="t" style="left:1587.70px;top:915.53px;font-size:14.5px;line-height:14.5px;color:#000;letter-spacing:0.186px;">Computer</div>
<svg style="position:absolute;left:1722px;top:922px" width="14" height="13"><g fill="#b8b8b8"><rect x="10" y="0" width="2" height="2"/><rect x="6.5" y="3.5" width="2" height="2"/><rect x="10" y="3.5" width="2" height="2"/><rect x="3" y="7" width="2" height="2"/><rect x="6.5" y="7" width="2" height="2"/><rect x="10" y="7" width="2" height="2"/><rect x="0" y="10.5" width="2" height="2"/><rect x="3" y="10.5" width="2" height="2"/><rect x="6.5" y="10.5" width="2" height="2"/><rect x="10" y="10.5" width="2" height="2"/></g></svg>
<div style="position:absolute;left:0px;top:1026px;width:1920px;height:4px;background:#1c1c20;"></div>
<div style="position:absolute;left:329px;top:1026px;width:1591px;height:3px;background:#34343a;"></div>
<div style="position:absolute;left:0px;top:1029px;width:1920px;height:1px;background:#111114;"></div>
<div style="position:absolute;left:0px;top:1030px;width:1920px;height:50px;background:linear-gradient(90deg,#dcdadd 0%,#e3e1e5 12%,#ebe9ed 30%,#edebee 55%,#ebe9ec 75%,#e9e7eb 88%,#e2e0e4 100%);"></div>
<div style="position:absolute;left:308px;top:1030px;width:57px;height:50px;background:#f5f3f7;"></div>
<div style="position:absolute;left:365px;top:1030px;width:1px;height:50px;background:#cfcdd1;"></div>
<svg style="position:absolute;left:19px;top:1044px" width="22" height="22"><path d="M1 3.2 L9.2 2 V10.2 H1Z M10.6 1.8 L21 0.4 V10.2 H10.6Z M1 11.6 H9.2 V19.8 L1 18.6Z M10.6 11.6 H21 V21.4 L10.6 20Z" fill="#000"/></svg>
<svg style="position:absolute;left:74px;top:1040px" width="32" height="32"><circle cx="19" cy="12" r="9.5" fill="none" stroke="#000" stroke-width="2.6"/><path d="M12 19 L3 28" stroke="#000" stroke-width="2.8" stroke-linecap="round"/></svg>
<svg style="position:absolute;left:139px;top:1044px" width="22" height="22"><path d="M1.5 1 V3 H13.5 V1 M1.5 20 V18 H13.5 V20" fill="none" stroke="#000" stroke-width="1.4"/><rect x="1.8" y="5.8" width="11.4" height="9.4" fill="none" stroke="#000" stroke-width="1.6"/><path d="M19 1.5 V20" stroke="#000" stroke-width="1.4"/><rect x="17.5" y="8.5" width="3" height="3" fill="#000"/></svg>
<svg style="position:absolute;left:199px;top:1041px" width="30" height="24"><path d="M1.5 2 L7 3.5 V9.5 L1.5 8Z M1.5 9 L7 10.5 V16.5 L1.5 15Z M1.5 16 L7 17.5 V23.5 L1.5 22Z" fill="#f4f4fa" stroke="#777" stroke-width="0.7"/><path d="M1.5 2 L4 0.5 H25 L28 3 H7Z" fill="#7a4e72"/><rect x="7" y="3" width="21" height="6.5" fill="#d060c0"/><rect x="7" y="10" width="21" height="6.5" fill="#2434d8"/><rect x="7" y="17" width="21" height="6.5" fill="#1c9a2a"/><rect x="15.5" y="0.5" width="3" height="23" fill="#a8782c"/><rect x="15" y="9" width="4" height="5" rx="1" fill="#ddd" stroke="#555" stroke-width="0.6"/><rect x="9" y="4.5" width="2" height="2" fill="#e8d040"/></svg>
<svg style="position:absolute;left:262px;top:1040px" width="28" height="31"><path d="M7 1 H21 L24 4 L27 5 L25.5 10 L26.5 13 L23 25 L14 30.5 L5 25 L1.5 13 L2.5 10 L1 5 L4 4Z" fill="#fb542b"/><path d="M6 8 L11 7 L14 8.5 L17 7 L22 8 L23 11 L20 16 L21 19 L17 23 L14 25 L11 23 L7 19 L8 16 L5 11Z" fill="#fff"/><path d="M9 11 L12.5 12 M19 11 L15.5 12 M14 14 V19 M11.5 20 L14 19 L16.5 20" stroke="#fb542b" stroke-width="1.3" fill="none"/></svg>
<svg style="position:absolute;left:323px;top:1042px" width="29" height="25"><path d="M1 1 H10 L12 3 H28 V23 H1Z" fill="#f8ce5a"/><path d="M1 1 H10 L12 3 V5 H1Z" fill="#e8a820"/><path d="M1 5 H28 V23 H1Z" fill="#fbd86e"/><path d="M5 12 H24 V24 H19 V17 H10 V24 H5Z" fill="#1f86e0"/></svg>
<svg style="position:absolute;left:384px;top:1041px" width="31" height="28"><defs><linearGradient id="npg" x1="0" y1="0" x2="0.3" y2="1"><stop offset="0" stop-color="#b8e0f4"/><stop offset="1" stop-color="#4aa0d0"/></linearGradient></defs><path d="M26 3 L29 23 L21 26Z" fill="#b08030"/><path d="M26 3 L28 22 L20 26 L17 25Z" fill="#e8eef4"/><path d="M12 1.5 L26 4 L19 25.5 L2 19.5Z" fill="url(#npg)"/><path d="M12 1 L26 3.5 L25.5 5 L11.5 2.5Z" fill="#707070"/></svg>
<svg style="position:absolute;left:445px;top:1039px" width="33" height="33"><circle cx="16.5" cy="16.5" r="15.5" fill="#0a0a0a"/><path d="M14 5 H19.5 V11 L24.5 21.5 H9 L14 11Z" fill="#fff"/><path d="M11.5 14.5 H22 L24.5 21.5 H9Z" fill="#e848c8"/><path d="M14 24.5 h1.5 M17.5 24.5 h1 M20 24.5 h1" stroke="#e848c8" stroke-width="1"/></svg>
<div style="position:absolute;left:189px;top:1077px;width:51px;height:3px;background:#e0962c;"></div>
<div style="position:absolute;left:251px;top:1077px;width:51px;height:3px;background:#e0962c;"></div>
<div style="position:absolute;left:308px;top:1077px;width:57px;height:3px;background:#e0962c;"></div>
<div style="position:absolute;left:375px;top:1077px;width:41px;height:3px;background:#e0962c;"></div>
<div style="position:absolute;left:437px;top:1077px;width:51px;height:3px;background:#e0962c;"></div>
<div style="position:absolute;left:365px;top:1077px;width:4px;height:3px;background:#e8c090;"></div>
<div style="position:absolute;left:416px;top:1077px;width:10px;height:3px;background:#e8c090;"></div>
<svg style="position:absolute;left:1443px;top:1038px" width="34" height="31"><defs><mask id="moonm"><rect width="34" height="31" fill="#fff"/><circle cx="21" cy="8" r="10.5" fill="#000"/></mask></defs><circle cx="15" cy="16" r="13" fill="#f59a2a" mask="url(#moonm)"/><path d="M2 13 Q1 8 6 8 Q7 3 13 4 Q17 3 19 7 Q22 8 21 12 Z" fill="#9cc4ec"/><path d="M4 12 Q5 9 9 9 Q11 6 15 7 Q18 8 18 12Z" fill="#b8d6f4"/><circle cx="24.5" cy="9" r="7" fill="#d43a24"/><text x="24.5" y="13" font-family="Liberation Sans" font-size="11" fill="#fff" text-anchor="middle">6</text></svg>
<div class="t" style="left:1485.00px;top:1047.61px;font-size:17px;line-height:17px;color:#000;letter-spacing:-0.700px;">46°F</div>
<div class="t" style="left:1531.00px;top:1047.61px;font-size:17px;line-height:17px;color:#000;letter-spacing:0.345px;">Mostly clear</div>
<svg style="position:absolute;left:1656px;top:1049px" width="18" height="10"><path d="M1 9 L9 1.5 L17 9" fill="none" stroke="#000" stroke-width="1.3"/></svg>
<svg style="position:absolute;left:1688px;top:1044px" width="18" height="23"><rect x="1" y="6" width="10" height="10" rx="1.5" fill="none" stroke="#000" stroke-width="1.2"/><path d="M11 9 L16 6 V16 L11 13" fill="none" stroke="#000" stroke-width="1.2"/><path d="M3 3 Q7 0.5 11 3 M3 19 Q7 21.5 11 19" fill="none" stroke="#000" stroke-width="1.1"/></svg>
<svg style="position:absolute;left:1714px;top:1045px" width="24" height="20"><path d="M1.5 5.5 H4.5 L10 1.5 V18.5 L4.5 14.5 H1.5Z" fill="none" stroke="#000" stroke-width="1.1"/><path d="M12.5 7 Q14 10 12.5 13 M15 4.5 Q18 10 15 15.5 M17.5 2 Q22 10 17.5 18" fill="none" stroke="#000" stroke-width="1.1"/></svg>
<svg style="position:absolute;left:1744px;top:1046px" width="23" height="19"><rect x="5.5" y="1.5" width="15" height="11" fill="none" stroke="#000" stroke-width="1.1"/><path d="M13 13 V15.5 M9.5 15.5 H16.5" stroke="#000" stroke-width="1.1"/><rect x="1.5" y="1.5" width="3" height="4" fill="#e8e6ea" stroke="#000" stroke-width="0.9"/><path d="M3 5.5 V17" stroke="#000" stroke-width="1.1"/></svg>
<div class="t" style="left:1784.80px;top:1036.65px;font-size:14px;line-height:14px;color:#000;letter-spacing:0.383px;">4:50 AM</div>
<div class="t" style="left:1778.90px;top:1060.15px;font-size:14px;line-height:14px;color:#000;letter-spacing:0.713px;">11/5/2025</div>
<svg style="position:absolute;left:1866px;top:1043px" width="36" height="34"><path d="M3 2 H22 V17 H9 L5 21 V17 H3Z" fill="#000"/><path d="M6 6 H19 M6 9.5 H19 M6 13 H15" stroke="#e4e2e6" stroke-width="1.2"/><circle cx="22.5" cy="21.5" r="9.5" fill="#e4e2e6" stroke="#555" stroke-width="1.1"/><text x="22.5" y="26.5" font-family="Liberation Sans" font-size="13" fill="#000" text-anchor="middle">1</text></svg>
<div style="position:absolute;left:1913px;top:1030px;width:1px;height:50px;background:#b8b6ba;"></div>
</body></html>
